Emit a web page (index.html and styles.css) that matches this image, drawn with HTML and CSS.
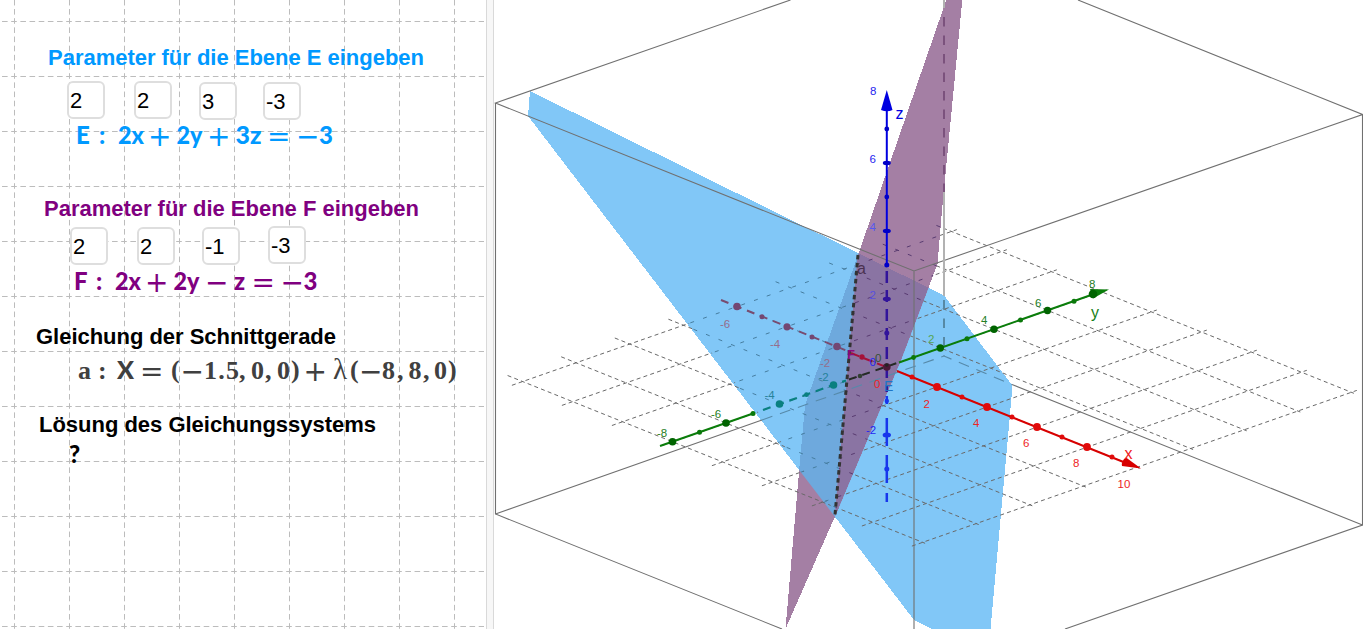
FILE: index.html
```html
<!DOCTYPE html>
<html lang="de">
<head>
<meta charset="utf-8">
<title>Schnittgerade zweier Ebenen</title>
<link rel="stylesheet" href="styles.css">
</head>
<body>
<main class="app">
  <section class="algebra">
    <svg class="paper" width="484" height="629" aria-hidden="true">
      <defs>
        <pattern id="cell" x="14" y="21" width="55" height="55" patternUnits="userSpaceOnUse">
          <path d="M.5 -2.8V58M-2.8 .5H58" class="paper-line"/>
        </pattern>
      </defs>
      <rect width="484" height="629" fill="url(#cell)"/>
    </svg>
    <div class="block block-e">
      <h2><svg class="head" width="484" height="30"><text x="48" y="23" textLength="376">Parameter für die Ebene E eingeben</text></svg></h2>
      <div class="inputs">
        <span class="box">2</span><span class="box">2</span><span class="box low">3</span><span class="box low">-3</span>
      </div>
      <svg class="formula" width="480" height="34">
        <text y="25" x="76">E</text><text x="99" y="25">:</text>
        <text x="118" y="25" textLength="26" lengthAdjust="spacingAndGlyphs">2x</text><text class="op" x="148" y="27">+</text>
        <text x="176.500" y="25" textLength="26" lengthAdjust="spacingAndGlyphs">2y</text><text class="op" x="207" y="27">+</text>
        <text x="235.500" y="25" textLength="26" lengthAdjust="spacingAndGlyphs">3z</text><text class="op" x="267" y="27">=</text>
        <text class="op" x="296" y="27">−</text><text x="319" y="25">3</text>
      </svg>
    </div>
    <div class="block block-f">
      <h2><svg class="head" width="484" height="30"><text x="44" y="23" textLength="375">Parameter für die Ebene F eingeben</text></svg></h2>
      <div class="inputs">
        <span class="box low">2</span><span class="box low">2</span><span class="box low">-1</span><span class="box">-3</span>
      </div>
      <svg class="formula" width="480" height="34">
        <text y="25" x="74">F</text><text x="96" y="25">:</text>
        <text x="115" y="25" textLength="26" lengthAdjust="spacingAndGlyphs">2x</text><text class="op" x="145" y="27">+</text>
        <text x="173.500" y="25" textLength="26" lengthAdjust="spacingAndGlyphs">2y</text><text class="op" x="205" y="27">−</text>
        <text x="234" y="25">z</text><text class="op" x="251.500" y="27">=</text>
        <text class="op" x="280.500" y="27">−</text><text x="303.500" y="25">3</text>
      </svg>
    </div>
    <div class="block block-line">
      <h2><svg class="head" width="484" height="30"><text x="36" y="23" textLength="300">Gleichung der Schnittgerade</text></svg></h2>
      <svg class="formula serif" width="480" height="38">
        <text x="78" y="28">a</text><text x="98" y="28">:</text><text class="sans" x="117" y="28" textLength="17" lengthAdjust="spacingAndGlyphs">X</text>
        <text class="op" x="140" y="30">=</text><text x="171" y="27" class="paren">(</text>
        <text class="op" x="180.500" y="30">−</text><text x="204" y="28" textLength="35">1.5</text><text x="239" y="28">,</text>
        <text x="251" y="28">0</text><text x="265" y="28">,</text><text x="277" y="28">0</text><text x="291" y="27" class="paren">)</text>
        <text class="op" x="303.500" y="30">+</text><text x="333" y="28" class="lambda">λ</text><text x="350" y="27" class="paren">(</text>
        <text class="op" x="359" y="30">−</text><text x="382" y="28">8</text><text x="397" y="28">,</text>
        <text x="408.500" y="28">8</text><text x="423" y="28">,</text><text x="434" y="28">0</text><text x="448" y="27" class="paren">)</text>
      </svg>
    </div>
    <div class="block block-solution">
      <h2><svg class="head" width="484" height="30"><text x="39" y="23" textLength="337">Lösung des Gleichungssystems</text></svg></h2>
      <svg class="formula question" width="480" height="36"><text x="69" y="27">?</text></svg>
    </div>
  </section>
  <div class="divider"></div>
  <section class="view3d">
    <svg width="869" height="629" viewBox="494 0 869 629">
      <defs>
        <path id="planeE" d="M530 91L944 295.5L1012 385V392L990.5 629H932L914 620L528 116Z"/>
        <path id="planeF" d="M947 -2H962.5L942 210L937.500 264L928 289L901 360L836.500 513L785.500 629L799 472L805 405L858 255Z"/>
        <clipPath id="inE"><use href="#planeE"/></clipPath>
        <clipPath id="inF"><use href="#planeF"/></clipPath>
        <clipPath id="leftOfA"><path d="M494 0H858V253L835 514V629H494Z"/></clipPath>
        <clipPath id="rightOfA"><path d="M858 0H1000V629H835V514L858 253Z"/></clipPath>
        <clipPath id="open"><path clip-rule="evenodd" d="M494 0H1363V629H494Z M528 116L530 91L858 253L947 0H962L942 210L937.5 264L901 360L836.5 513Z"/></clipPath>
      </defs>

      <g shape-rendering="crispEdges">
        <use href="#planeE" fill="#81c7f7"/>
        <use href="#planeF" fill="#a47fa4"/>
        <g clip-path="url(#leftOfA)"><use href="#planeF" fill="#6ea9dd" clip-path="url(#inE)"/></g>
        <g clip-path="url(#rightOfA)"><use href="#planeE" fill="#8a74a3" clip-path="url(#inF)"/></g>
      </g>

      <g class="grid" clip-path="url(#open)"><path id="gx" class="gx"/><path id="gy" class="gy"/></g>
      <g clip-path="url(#leftOfA)"><g class="grid hidden" clip-path="url(#inE)"><path id="hx"/><path id="hy"/></g></g>
      <g clip-path="url(#rightOfA)"><g class="grid hidden violet" clip-path="url(#inF)"><use href="#hx"/><use href="#hy"/></g></g>

      <g class="edges">
        <path d="M790.500 0L495.500 103L914 271L1362.500 114.500L1078 0M495.500 103V514L782 629M1362.500 114V525L1065 629M914 271V629"/>
        <path d="M495.500 514L762 420M1012 384.500L1362.500 525"/>
        <path class="back" d="M944 0V8M944 192V296"/>
        <path class="back-dash violet-edge" d="M944 17V192"/>
        <path class="back-dash" d="M944 300V356"/>
        <path class="thin-dash" d="M762 420L944 356L1012 384.500"/>
      </g>

      <!-- x axis -->
      <g class="ax-x">
        <path class="neg" d="M721 300L850 352"/>
        <g class="neg-dots"><circle cx="737" cy="306.500" r="3.800"/><circle cx="787" cy="326.800" r="3.600"/><circle cx="837" cy="346.500" r="3.800"/><circle cx="762" cy="316.800" r="2.500"/><circle cx="812" cy="337" r="2.500"/></g>
        <path d="M851 353L886 367" stroke-dasharray="9 5" stroke="#a51238" stroke-width="2"/><circle cx="862" cy="357" r="2.700" fill="#a51238"/>
        <path d="M897 371L1126 463" stroke="#d80000" stroke-width="2"/>
        <path d="M1122 466Q1121 461 1126 457.500L1141 468.500Z" fill="#d80000"/>
        <g fill="#e00b0b"><circle cx="937" cy="387" r="3.900"/><circle cx="987" cy="407" r="3.900"/><circle cx="1037" cy="427" r="3.900"/><circle cx="1087" cy="447" r="3.900"/><circle cx="912" cy="377" r="2.500"/><circle cx="962" cy="397" r="2.500"/><circle cx="1012" cy="417" r="2.500"/><circle cx="1062" cy="437" r="2.500"/><circle cx="1112" cy="457" r="2.500"/></g>
      </g>
      <!-- y axis -->
      <g class="ax-y">
        <path d="M660 446L753 413.500" stroke="#0a7d0a" stroke-width="2"/>
        <path d="M763 410L846 380.500" stroke="#0a8080" stroke-width="2.200" stroke-dasharray="8 6"/>
        <path d="M849 379.500L897 363" stroke="#252b25" stroke-width="2" stroke-dasharray="8 6"/>
        <path d="M899 362.500L1094 294" stroke="#0a7d0a" stroke-width="2"/>
        <path d="M1090 289L1109 289.500L1093 298.500Z" fill="#0a7d0a"/>
        <g fill="#006400"><circle cx="672.500" cy="441.700" r="3.800"/><circle cx="726" cy="423" r="3.800"/><circle cx="940.300" cy="348" r="3.700"/><circle cx="994" cy="329.300" r="3.700"/><circle cx="1047.500" cy="310.500" r="3.700"/><circle cx="1093" cy="294" r="4.300"/></g>
        <g fill="#0a780a"><circle cx="699.500" cy="432.300" r="2.500"/><circle cx="753" cy="413.500" r="2.500"/><circle cx="913.500" cy="357.500" r="2.400"/><circle cx="967" cy="338.700" r="2.500"/><circle cx="1020.500" cy="320" r="2.500"/><circle cx="1074" cy="301.300" r="2.500"/></g>
        <g fill="#0a8080"><circle cx="779.500" cy="404" r="3.800"/><circle cx="833.500" cy="385" r="3.800"/><circle cx="806.500" cy="394.700" r="2.400"/></g><circle cx="860" cy="376" r="2.300" fill="#334033"/>
      </g>
      <!-- z axis -->
      <g class="ax-z">
        <path d="M886.800 108V265" stroke="#0000e0" stroke-width="2"/>
        <path d="M886.800 271V392" stroke="#32149b" stroke-width="2.500" stroke-dasharray="12 7"/>
        <path d="M886.800 396V404M886.800 418V446M886.800 455V483M886.800 493V502" stroke="#1736ec" stroke-width="2.500"/>
        <path d="M886.800 90L892.500 110Q887 112.500 881 110Z" fill="#0000e0"/>
        <g fill="#0000c8"><ellipse cx="886.800" cy="163" rx="4" ry="2.200"/><ellipse cx="886.800" cy="231" rx="4" ry="2.200"/><circle cx="886.800" cy="129" r="2.400"/><circle cx="886.800" cy="197" r="2.400"/><circle cx="886.800" cy="265" r="2.500"/></g>
        <g fill="#32149b"><ellipse cx="886.800" cy="299" rx="4" ry="2.200"/><circle cx="886.800" cy="333" r="2.500"/></g>
        <g fill="#1736ec"><circle cx="886.800" cy="401" r="2.200"/><ellipse cx="886.800" cy="435" rx="4.200" ry="2.500"/><circle cx="886.800" cy="469" r="2.500"/></g>
        <circle cx="886.800" cy="367" r="3.800" fill="#4b1836"/><circle cx="886.800" cy="365" r="1.800" fill="#222"/>
      </g>

      <path class="line-a" d="M858 255L835 515"/>

      <g class="lbl z"><text x="870" y="95">8</text><text x="869.500" y="163">6</text><text x="869.500" y="231" fill="#5558ef">4</text><text x="869.500" y="299" fill="#5950df">2</text><text x="866" y="434">-2</text><text x="869.500" y="366">0</text></g>
      <g class="lbl x"><text x="720" y="328" class="dim">-6</text><text x="770" y="348" class="dim">-4</text><text x="820" y="367" class="dim">-2</text><text x="874" y="388">0</text><text x="923.500" y="408">2</text><text x="973" y="427">4</text><text x="1023" y="447">6</text><text x="1073" y="467">8</text><text x="1117.500" y="487.500">10</text></g>
      <g class="lbl y"><text x="657" y="437">-8</text><text x="711" y="417.500">-6</text><text x="764.500" y="398.500" class="teal">-4</text><text x="818.500" y="380.500" class="teal">-2</text><text x="875" y="361.500" fill="#345034">0</text><text x="928" y="342.500" fill="#55a555">2</text><text x="981" y="323.500">4</text><text x="1035" y="306.500">6</text><text x="1089" y="287.500">8</text></g>
      <g class="name"><text x="895.500" y="119" fill="#0000e0">z</text><text x="1124.500" y="459" fill="#ef2020">x</text><text x="1091" y="318" fill="#168016">y</text><text x="857" y="274" fill="#4b3150">a</text><text x="847" y="359" fill="#8b087f" class="edge-name f">F</text><text x="884" y="391" fill="#1d75c5" class="edge-name">E</text></g>
    </svg>
  </section>
</main>
<script src="scene.js"></script>
</body>
</html>
```

FILE: styles.css
```css
body { margin: 0; background: #fff; font-family: "Liberation Sans", Arial, sans-serif; overflow: hidden; }
svg { display: block; }
.app { display: flex; width: 1363px; height: 629px; }

/* Left panel */
.algebra { position: relative; width: 486px; flex: none; display: flex; flex-direction: column; }
.paper { position: absolute; inset: 0; z-index: -1; }
.paper-line { stroke: #bcbcbc; stroke-width: 1; stroke-dasharray: 5.600 3.567; fill: none; }
.divider { width: 6px; flex: none; background: #f7f7f7; border-left: 1px solid #d9d9d9; border-right: 1px solid #d9d9d9; }
.block { display: flex; flex-direction: column; box-sizing: border-box; flex: none; }
.block h2 { margin: 0; font-size: 22px; }
.head text { font: bold 22px "Liberation Sans", Arial, sans-serif; fill: currentColor; }
.block-e { padding-top: 42px; height: 151px; color: #0099ff; }
.block-f { margin-top: 42px; height: 128px; color: #800080; }
.block-line { height: 88px; }
.inputs { display: flex; align-items: flex-start; box-sizing: border-box; flex: none; color: #000; gap: 29px; }
.block-e .inputs { padding: 9px 0 0 67px; height: 47px; }
.block-f .inputs { padding: 3px 0 0 70px; height: 42px; }
.box { box-sizing: border-box; width: 38px; height: 38px; flex: none; border: 2px solid #dedede; border-radius: 6px; background: #fff; font-size: 22px; line-height: 35px; padding-left: 1px; white-space: nowrap; }
.box { margin-right: -1px; }
.box.low { margin-top: 1px; }
.box:nth-child(2) { margin-left: 1px; }
.box:nth-child(3) { margin-left: -1px; }
.block-e .box:nth-child(4) { margin-left: -2px; }
.formula { flex: none; }
.formula text { font: 900 24px Lato, "Noto Sans", sans-serif; fill: currentColor; }
.formula .op { font: 28px "DejaVu Sans", sans-serif; }
.serif { color: #404040; }
.formula.serif text { font: bold 26px "Liberation Serif", serif; }
.formula.serif .op { font: 28px "DejaVu Sans", sans-serif; }
.formula.serif .sans { font: 900 24px Lato, sans-serif; }
.formula.serif .lambda { font-weight: normal; font-size: 29px; }
.question { color: #000; margin-top: -3px; }

/* 3D view */
.view3d { flex: none; width: 869px; }
.grid { fill: none; stroke: #696969; stroke-width: 1; stroke-dasharray: 4 3.200; }
.grid.hidden { stroke: #467d9f; stroke-dasharray: 4 9.500; }
.grid.violet { stroke: #583b70; }
.edges path { fill: none; stroke: #707070; stroke-width: 1.100; }
.edges .back { stroke: #b2b2b2; stroke-width: 2; }
.edges .back-dash { stroke: #5689a5; stroke-width: 2; stroke-dasharray: 9.500 9; }
.edges .violet-edge { stroke: #7b527d; }
.edges .thin-dash { stroke: #568aaa; stroke-dasharray: 11 8; }
.neg { fill: none; stroke: #784c70; stroke-width: 2; stroke-dasharray: 8 6; }
.neg-dots { fill: #734773; }
.line-a { fill: none; stroke: #333; stroke-width: 3; stroke-dasharray: 4.500 3.500; }
.lbl text { font: 11.500px "Liberation Sans", Arial, sans-serif; }
.lbl.z { fill: #2525f0; }
.lbl.x { fill: #ee2525; }
.lbl.y { fill: #268026; }
.lbl .dim { fill: #956d8c; }
.lbl .teal { fill: #27829a; }
.name text { font: 16px "Liberation Sans", Arial, sans-serif; }
.name .edge-name { font-size: 14px; }
.name .f { font-size: 13px; font-weight: bold; }
```

FILE: scene.js
```js
// Projects the xOy plane and draws its 2-unit grid.
const project = (x, y) =>
  (887 + 25 * x + 26.8 * y).toFixed(1) + " " + (366.8 + 10.05 * x - 9.38 * y).toFixed(1);

let alongX = "";
let alongY = "";
for (let y = -8; y <= 8; y += 2) {
  alongX += "M" + project(-6.6, y) + "L" + project(10.1, y);
}
for (let x = -6; x <= 10; x += 2) {
  alongY += "M" + project(x, -8.4) + "L" + project(x, 8.2);
}
for (const id of ["gx", "hx"]) document.getElementById(id).setAttribute("d", alongX);
for (const id of ["gy", "hy"]) document.getElementById(id).setAttribute("d", alongY);
```
